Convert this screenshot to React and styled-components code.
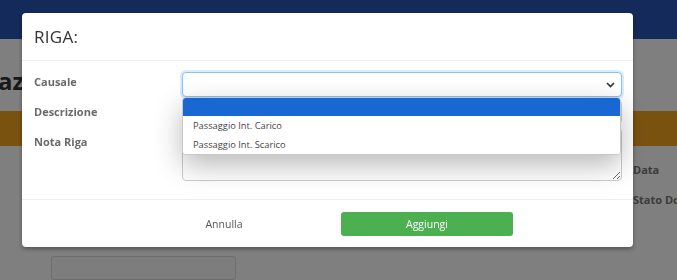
import React from 'react'
import styled, { createGlobalStyle } from 'styled-components'

const GlobalStyle = createGlobalStyle`
html, body {
  margin: 0;
  padding: 0;
  width: 677px;
  height: 280px;
  overflow: hidden;
  font-family: "Open Sans", "Noto Sans", sans-serif;
  background: #fff;
}
* { box-sizing: border-box; }
`

// pagina sotto il modale
const Pagina = styled.div`
width: 677px;
height: 280px;
overflow: hidden;
background: #fff;
`

const Navbar = styled.div`
height: 39px;
background: #2654b6;
`

const Titolo = styled.div`
height: 72px;
display: flex;
align-items: center;
padding-top: 10px;
font-size: 24px;
font-weight: 700;
color: #333;
white-space: nowrap;
text-indent: -2px;
`

const BarraArancio = styled.div`
height: 35px;
background: #f5a421;
`

const FormSotto = styled.div`
display: grid;
grid-template-columns: 633px 1fr;
`

const ColSinistra = styled.div`
padding: 110px 0 0 51px;
`

const InputFinto = styled.div`
width: 185px;
height: 24px;
border: 1px solid #dcdcdc;
border-radius: 3px;
background: #fafafa;
`

const ColDestra = styled.div`
padding-top: 18px;
display: flex;
flex-direction: column;
gap: 19px;
`

const EtichettaPagina = styled.div`
font-size: 11px;
font-weight: 700;
color: #777;
white-space: nowrap;
line-height: 11px;
`

// overlay + modale
const Overlay = styled.div`
position: fixed;
inset: 0;
background: rgba(0, 0, 0, 0.5);
padding: 13px 0 0 22px;
`

const Modale = styled.div`
width: 611px;
background: #fff;
border-radius: 4px;
box-shadow: 0 2px 4px rgba(0, 0, 0, 0.35);
`

const Header = styled.div`
height: 48px;
display: flex;
align-items: center;
padding: 0 12px;
border-bottom: 1px solid #eceef0;
font-size: 17px;
color: #333;
letter-spacing: 0.3px;
`

const Corpo = styled.div`
padding: 11px 11px 18px 12px;
display: flex;
flex-direction: column;
gap: 3px;
`

const Riga = styled.div`
display: grid;
grid-template-columns: 148px 440px;
align-items: start;
margin-top: ${p => p.mt || 0}px;
`

const Etichetta = styled.div`
font-size: 11px;
line-height: 15px;
font-weight: 700;
color: #6a6a6a;
padding-top: ${p => p.pt || 0}px;
`

const SelectWrap = styled.div`
position: relative;
`

const SelectBox = styled.div`
height: 25px;
border: 1px solid #86c1f7;
border-radius: 4px;
box-shadow: 0 0 0 2px rgba(130, 190, 250, 0.3);
background: #fff;
display: flex;
align-items: center;
justify-content: flex-end;
padding-right: 6px;
`

const Tendina = styled.div`
position: absolute;
top: 100%;
left: 0;
right: 1px;
z-index: 5;
background: #fff;
border: 1px solid #c8c8c8;
border-radius: 4px;
overflow: hidden;
box-shadow: 0 10px 28px rgba(0, 0, 0, 0.28);
`

const Opzione = styled.div`
height: ${p => (p.selected ? 18 : 19)}px;
background: ${p => (p.selected ? '#1967d2' : '#fff')};
color: #444;
font-size: 9.3px;
padding-left: 10px;
display: flex;
align-items: center;
white-space: nowrap;
`

const InputTesto = styled.div`
height: 24px;
border: 1px solid #ccc;
border-radius: 4px;
background: #fff;
`

const AreaTesto = styled.textarea`
height: 53px;
width: 440px;
border: 1px solid #ccc;
border-radius: 4px;
background: #fff;
margin: 0;
display: block;
font-family: inherit;
`

const Footer = styled.div`
height: 48px;
border-top: 1px solid #eceef0;
display: flex;
align-items: center;
justify-content: center;
gap: 31px;
padding-right: 4px;
`

const Bottone = styled.button`
width: 172px;
height: 24px;
border: 0;
border-radius: 3px;
font-family: inherit;
font-size: 10.5px;
background: ${p => (p.primary ? '#4caf50' : 'transparent')};
color: ${p => (p.primary ? '#fff' : '#555')};
padding: 0;
`

const Chevron = () => (
  <svg width="9" height="6" viewBox="0 0 9 6">
    <path d="M1 1l3.5 3.5L8 1" fill="none" stroke="#333" strokeWidth="1.6" />
  </svg>
)

export default function App() {
  return (
    <>
      <GlobalStyle />
      <Pagina>
        <Navbar />
        <Titolo>azz</Titolo>
        <BarraArancio />
        <FormSotto>
          <ColSinistra>
            <InputFinto />
          </ColSinistra>
          <ColDestra>
            <EtichettaPagina>Data</EtichettaPagina>
            <EtichettaPagina>Stato Documento</EtichettaPagina>
          </ColDestra>
        </FormSotto>
      </Pagina>
      <Overlay>
        <Modale>
          <Header>RIGA:</Header>
          <Corpo>
            <Riga>
              <Etichetta pt={2}>Causale</Etichetta>
              <SelectWrap>
                <SelectBox>
                  <Chevron />
                </SelectBox>
                <Tendina>
                  <Opzione selected />
                  <Opzione>Passaggio Int. Carico</Opzione>
                  <Opzione>Passaggio Int. Scarico</Opzione>
                </Tendina>
              </SelectWrap>
            </Riga>
            <Riga>
              <Etichetta pt={4}>Descrizione</Etichetta>
              <InputTesto />
            </Riga>
            <Riga mt={1}>
              <Etichetta pt={6}>Nota Riga</Etichetta>
              <AreaTesto />
            </Riga>
          </Corpo>
          <Footer>
            <Bottone>Annulla</Bottone>
            <Bottone primary>Aggiungi</Bottone>
          </Footer>
        </Modale>
      </Overlay>
    </>
  )
}
